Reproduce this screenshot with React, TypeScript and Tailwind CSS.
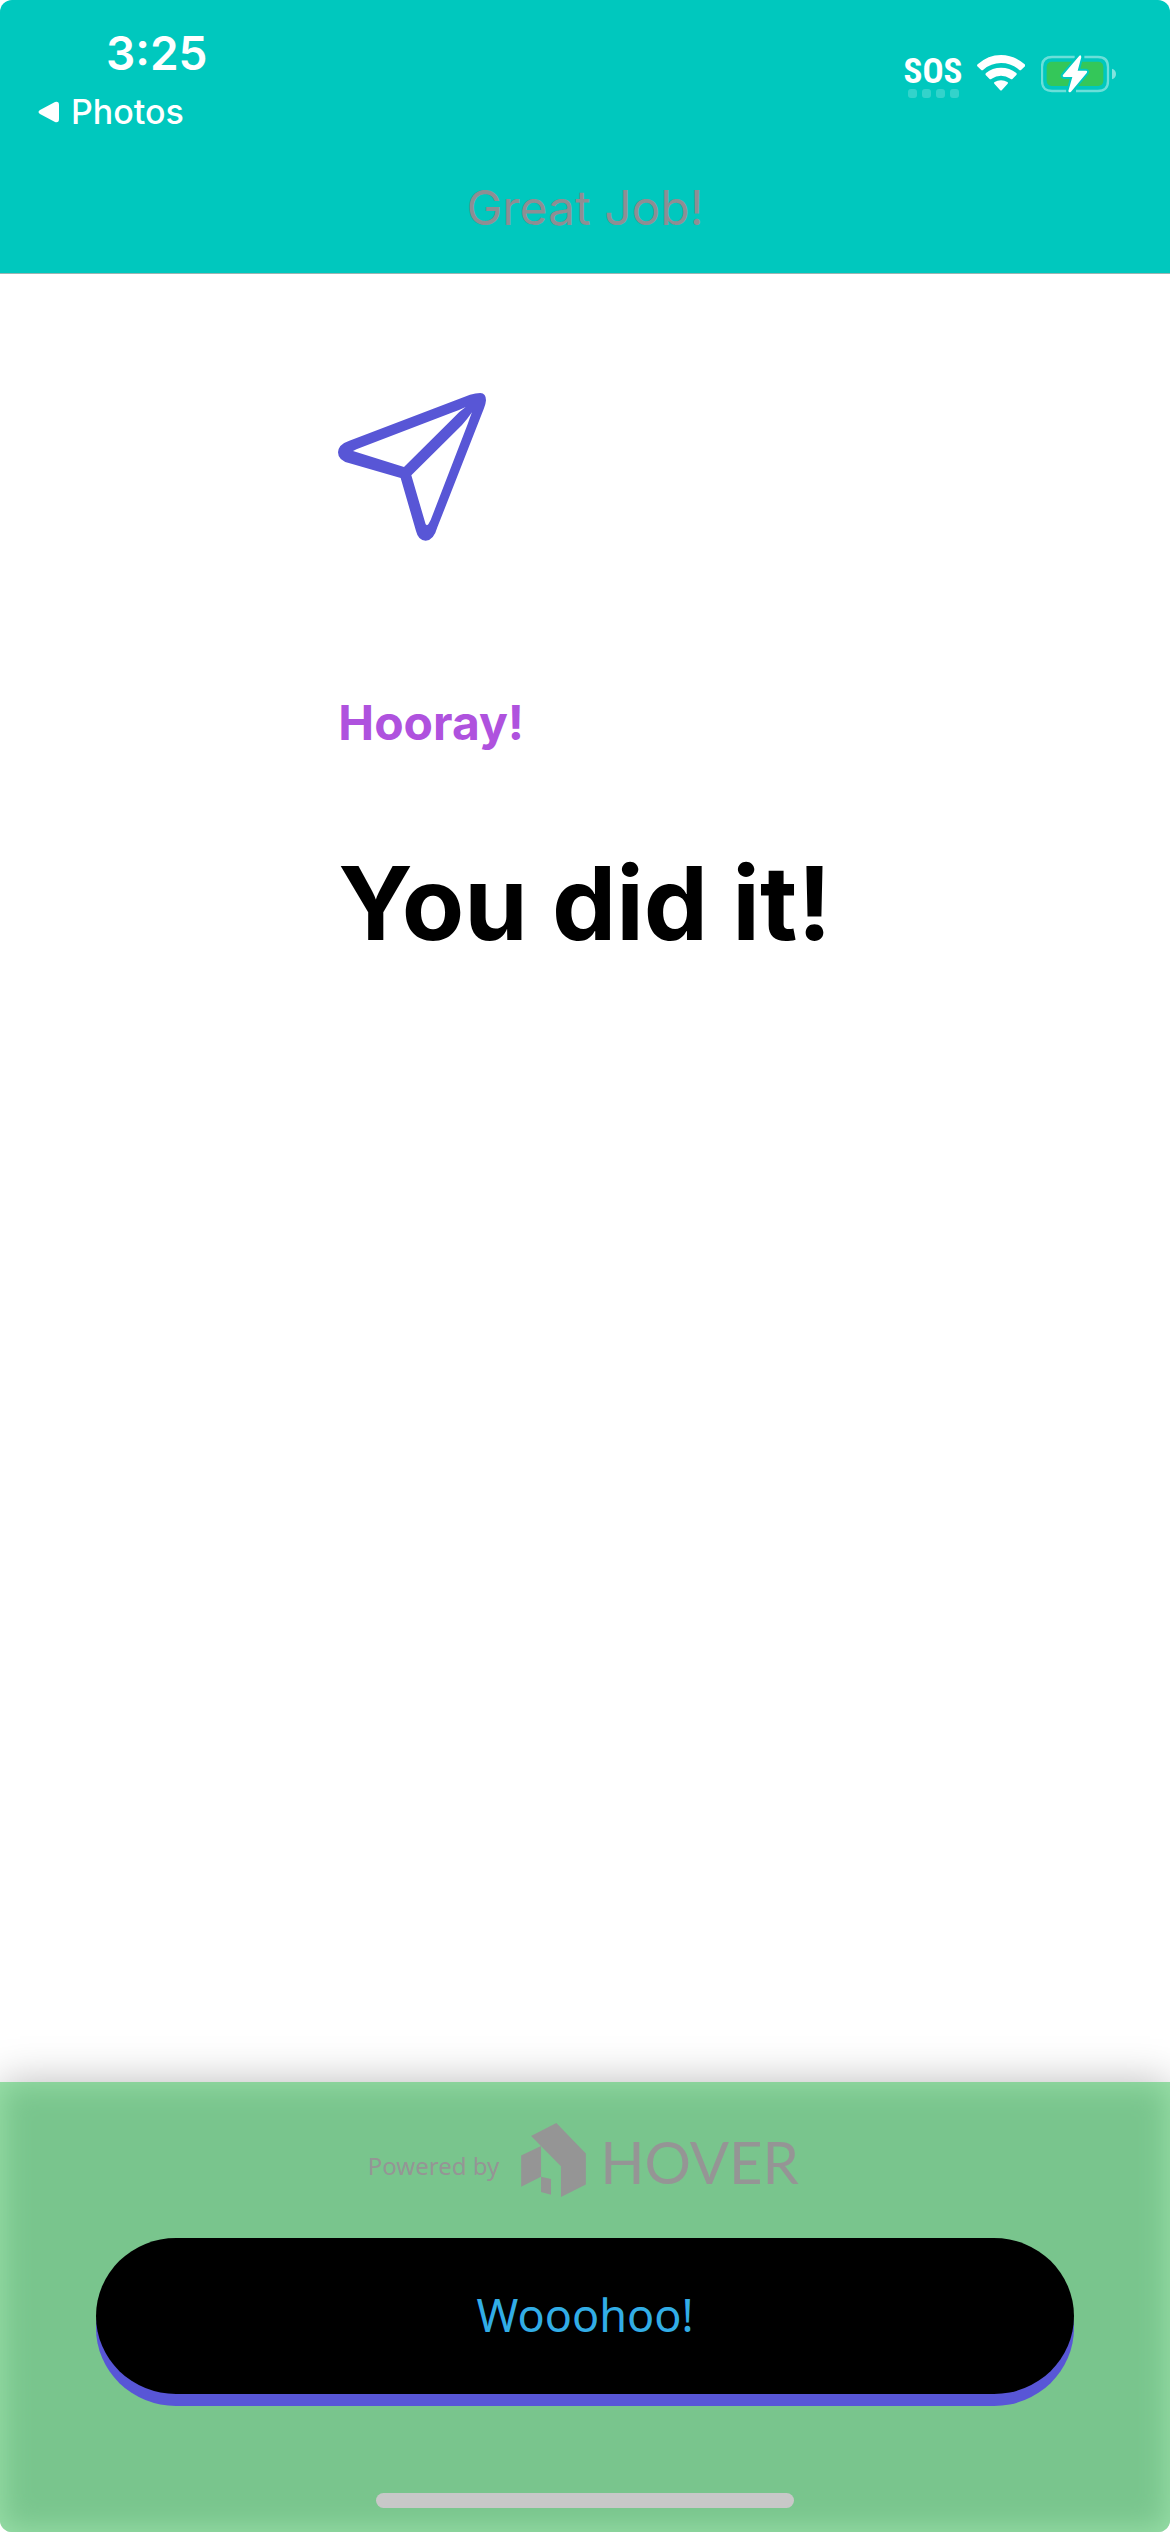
import React from "react";

function SignalSos() {
  return (
    <div className="flex flex-col items-center gap-1">
      <svg width="56" height="30" viewBox="0 0 56 30" role="img" aria-label="SOS" className="overflow-visible">
        <text x="28" y="28" textAnchor="middle" fill="#fff" fontFamily="'Liberation Sans Narrow', 'Roboto Condensed', Roboto, sans-serif" fontWeight="700" fontSize="35">SOS</text>
      </svg>
      <div className="flex gap-[5px]">
        <span className="size-[9px] rounded-[3px] bg-white/20" />
        <span className="size-[9px] rounded-[3px] bg-white/20" />
        <span className="size-[9px] rounded-[3px] bg-white/20" />
        <span className="size-[9px] rounded-[3px] bg-white/20" />
      </div>
    </div>
  );
}

function Wifi() {
  return (
    <svg width="48" height="36" viewBox="345 105 144 108" fill="#fff" aria-hidden="true">
      <path d="M346 139Q344 136 347 133Q378 105 417 105Q456 105 488 133Q491 136 489 139L478 149Q475 152 471 149Q447 129 417 129Q387 129 364 149Q360 152 357 149Z" />
      <path d="M371 165Q369 162 372 159Q391 143 417 143Q443 143 463 159Q466 162 463 165L452 176Q449 179 445 176Q432 167 417 167Q402 167 389 176Q385 179 382 176Z" />
      <path d="M397 191Q394 188 398 186Q406 181 417 181Q428 181 436 186Q440 188 437 191L420 210Q417 213 414 210Z" />
    </svg>
  );
}

function Battery() {
  return (
    <svg width="75" height="38" viewBox="540 105 225 114" aria-hidden="true">
      <g fill="none" stroke="#fff" strokeOpacity=".42" strokeWidth="7">
        <path d="M641 111H573Q543 111 543 141V183Q543 213 573 213H616" />
        <path d="M670 111H711Q741 111 741 141V183Q741 213 711 213H645" />
      </g>
      <path d="M753 146Q765 150 765 162Q765 174 753 178Z" fill="#fff" fillOpacity=".5" />
      <rect x="557" y="125" width="170" height="73" rx="15" fill="#34c759" />
      <path d="M655 107L606 165Q603 171 610 171H634L622 213Q624 220 630 215L677 159Q681 153 675 152H650L661 111Q660 104 655 107Z" fill="#fff" stroke="#00c8be" strokeWidth="12" paintOrder="stroke" strokeLinejoin="round" />
    </svg>
  );
}

function PaperPlane() {
  return (
    <svg width="148" height="148" viewBox="57 69 444 444" fill="#5856d6" aria-hidden="true">
      <path
        fillRule="evenodd"
        d="M453 74Q470 69 484 69Q501 70 501 91Q500 103 495 115L355 472Q344 512 320 512Q298 512 291 483L245 324L92 280Q57 272 57 247Q58 223 91 212ZM102 243L255 291L403 144Q420 125 440 111Q420 121 394 130L124 233Q112 237 102 243ZM277 316L320 463Q324 468 328 463Q336 450 342 432L447 160Q452 145 459 127Q446 146 429 165Z"
      />
    </svg>
  );
}

function HouseMark() {
  return (
    <svg width="65" height="74" viewBox="540 71 195 223" fill="#959595" aria-hidden="true">
      <path d="M646 71L735 163V256L660 294V201L570 110ZM540 169L600 140V233L540 263ZM600 233L630 240V287L600 279Z" />
    </svg>
  );
}

export default function App() {
  return (
    <div className="flex min-h-screen flex-col overflow-hidden rounded-[12px] bg-white font-['Inter',sans-serif]">
      <header className="border-b border-[#9bb5b3] bg-[#00c8be] text-white">
        <div className="flex items-start justify-between pr-[54px] pl-[38px]">
          <div>
            <div className="mt-7 pl-[68px] text-[46px] leading-[50px] font-semibold">3:25</div>
            <a href="#photos" className="mt-3 flex items-center gap-3 text-[34px] leading-[44px] font-medium">
              <svg width="21" height="22" viewBox="0 0 21 22" fill="currentColor" aria-hidden="true">
                <path d="M2 9L17 1Q21 0 21 4V18Q21 22 17 21L2 13Q-1 11 2 9Z" />
              </svg>
              Photos
            </a>
          </div>
          <div className="mt-[55px] flex items-start gap-4">
            <SignalSos />
            <Wifi />
            <Battery />
          </div>
        </div>
        <h1 className="mt-[43px] pb-[34px] text-center text-[48px] leading-[62px] text-[#8e8e93]">Great Job!</h1>
      </header>

      <main className="flex flex-1 justify-center pt-[119px]">
        <div className="flex flex-col items-start">
          <PaperPlane />
          <p className="mt-[152px] text-[48px] leading-[60px] font-bold text-[#af52de]">Hooray!</p>
          <h2 className="mt-[87px] text-[102px] leading-[126px] font-bold text-black">You did it!</h2>
        </div>
      </main>

      <footer className="relative flex flex-col items-center bg-[#79c58d] px-24 pt-[41px] pb-6 font-['Noto_Sans',sans-serif] shadow-[0_0_40px_rgba(0,0,0,0.27),inset_0_0_32px_#9ee3ac]">
        <div className="flex items-center pl-5 text-[#959595]">
          <span className="mt-3 text-[24px] leading-8">Powered by</span>
          <div className="ml-[22px] flex items-center gap-[14px]">
            <HouseMark />
            <span className="mt-1 w-[222px] font-['Lato',sans-serif] text-[58px] leading-[60px]">HOVER</span>
          </div>
        </div>
        <button type="button" className="mt-[41px] h-[156px] w-full rounded-[80px/78px] bg-black pb-[2px] text-[45px] leading-[60px] text-[#32ade6] shadow-[0_12px_0_#5856d6]">
          Wooohoo!
        </button>
        <div className="mt-[99px] h-[15px] w-[418px] rounded-full bg-[#c8c8c8]" />
      </footer>
    </div>
  );
}
